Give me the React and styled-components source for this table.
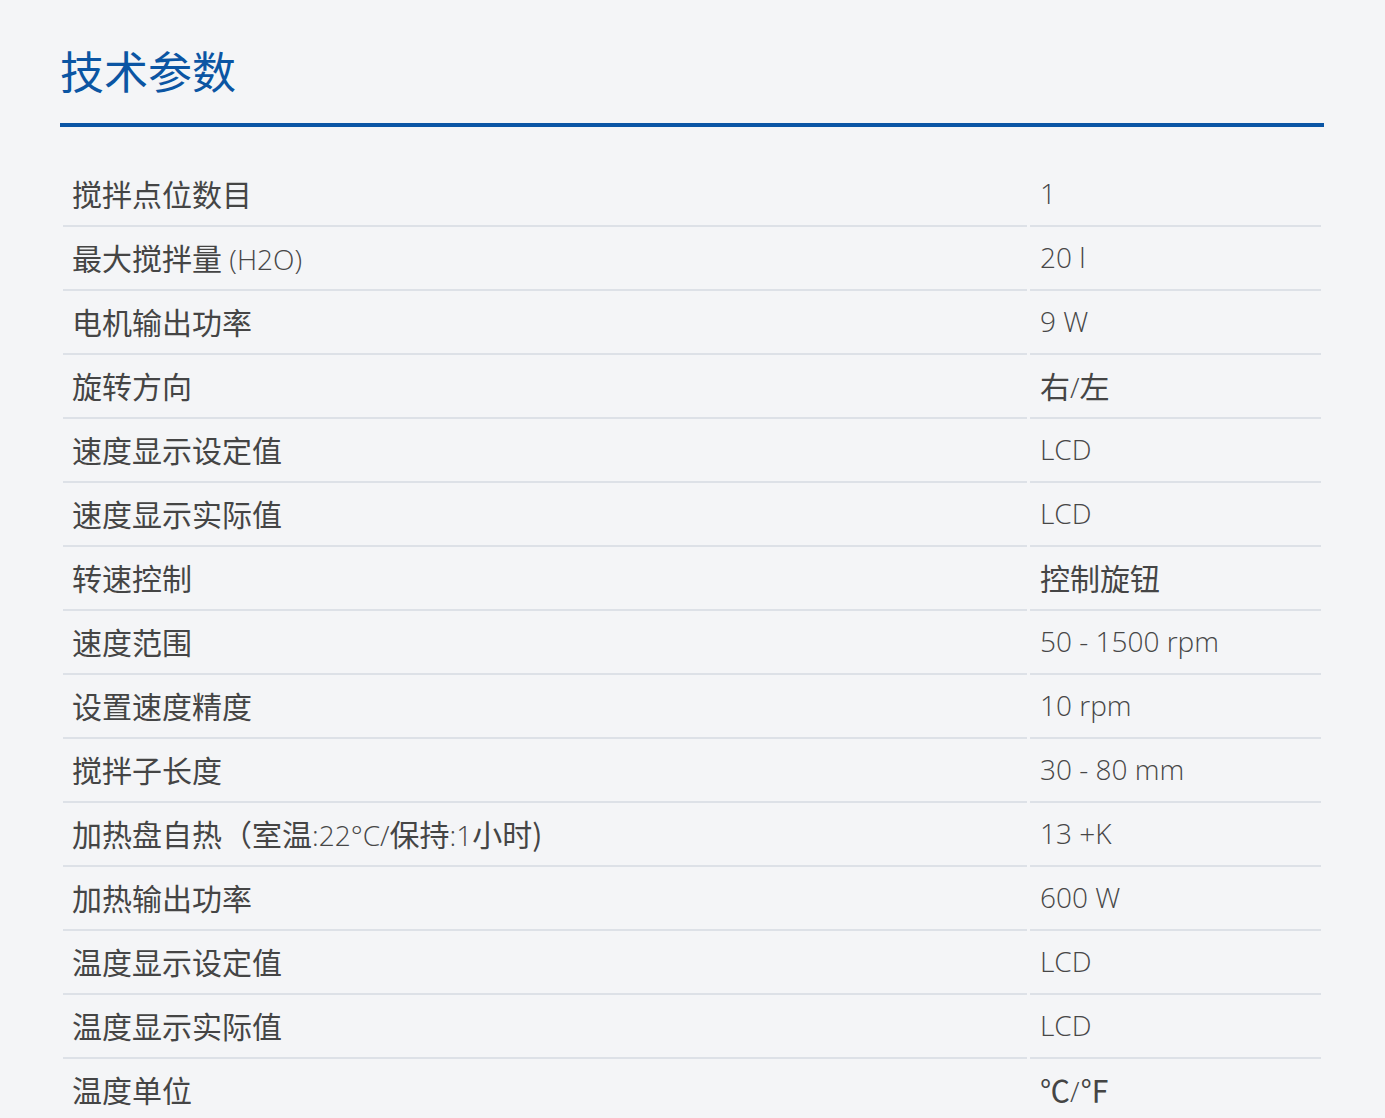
import React from "react";
import styled, { createGlobalStyle } from "styled-components";

const Global = createGlobalStyle`
  html, body { margin: 0; padding: 0; background: #f4f5f7; }
  body { font-family: "Open Sans", "Noto Sans CJK SC", sans-serif; }
`;

const Page = styled.div`
  padding: 40px 61px 0 60px;
`;

const Title = styled.h2`
  margin: 0;
  font-size: 44px;
  line-height: 60px;
  font-weight: 400;
  color: #0b55a3;
  font-family: "Noto Sans CJK SC", sans-serif;
`;

const Rule = styled.div`
  margin-top: 23px;
  height: 4px;
  background: #0a55a5;
`;

const Table = styled.table`
  margin-top: 36px;
  width: 100%;
  border-collapse: separate;
  border-spacing: 3px 0;
  table-layout: fixed;
`;

const Cell = styled.td`
  box-sizing: border-box;
  height: 64px;
  padding: 0 0 2px ${(p) => (p.$value ? 10 : 9)}px;
  border-bottom: 2px solid #dde1e7;
  font-size: 28px;
  font-weight: 300;
  color: #474747;
  vertical-align: middle;
  white-space: nowrap;
  width: ${(p) => (p.$value ? "291px" : "auto")};
`;

const Han = styled.span`
  font-family: "Noto Sans CJK SC", sans-serif;
  font-size: 30px;
  font-weight: 400;
  color: #454545;
`;

const CJK = /([\u2100-\u214f\u3000-\u303f\u4e00-\u9fff\uff00-\uffef]+\)?)/;
const IS_CJK = /[\u2100-\u214f\u3000-\u303f\u4e00-\u9fff\uff00-\uffef]/;

function Text({ children }) {
  return children
    .split(CJK)
    .filter(Boolean)
    .map((part, i) =>
      IS_CJK.test(part) ? <Han key={i}>{part}</Han> : <span key={i}>{part}</span>
    );
}

const rows = [
  ["搅拌点位数目", "1"],
  ["最大搅拌量 (H2O)", "20 l"],
  ["电机输出功率", "9 W"],
  ["旋转方向", "右/左"],
  ["速度显示设定值", "LCD"],
  ["速度显示实际值", "LCD"],
  ["转速控制", "控制旋钮"],
  ["速度范围", "50 - 1500 rpm"],
  ["设置速度精度", "10 rpm"],
  ["搅拌子长度", "30 - 80 mm"],
  ["加热盘自热（室温:22°C/保持:1小时)", "13 +K"],
  ["加热输出功率", "600 W"],
  ["温度显示设定值", "LCD"],
  ["温度显示实际值", "LCD"],
  ["温度单位", "℃/℉"],
];

export default function App() {
  return (
    <>
      <Global />
      <Page>
        <Title>技术参数</Title>
        <Rule />
        <Table>
          <tbody>
            {rows.map(([k, v]) => (
              <tr key={k}>
                <Cell><Text>{k}</Text></Cell>
                <Cell $value><Text>{v}</Text></Cell>
              </tr>
            ))}
          </tbody>
        </Table>
      </Page>
    </>
  );
}
